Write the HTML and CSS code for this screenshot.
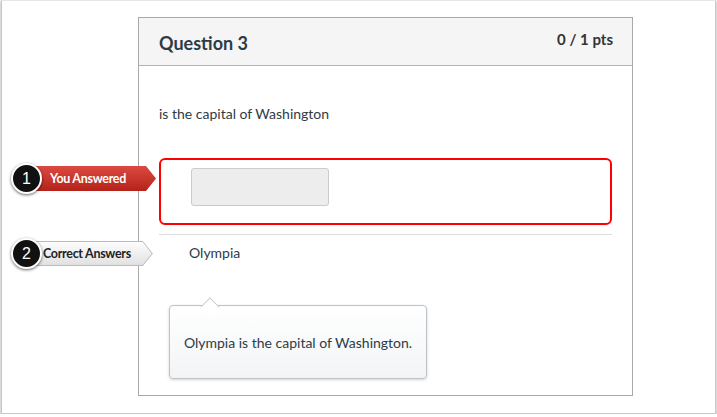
FILE: index.html
```html
<!DOCTYPE html>
<html>
<head>
<meta charset="utf-8">
<link rel="stylesheet" href="styles.css">
</head>
<body>
<div class="frame">
  <div class="card">
    <div class="card-head">
      <h2 class="q-title">Question 3</h2>
      <div class="q-pts">0 / 1 pts</div>
    </div>
    <div class="card-body">
      <p class="q-text">is the capital of Washington</p>
      <div class="answered">
        <div class="blank-input"></div>
      </div>
      <div class="correct">Olympia</div>
      <div class="tip">
        <span class="tip-arrow"></span>
        Olympia is the capital of Washington.
      </div>
    </div>
  </div>

  <div class="callout callout-1">
    <span class="num">1</span>
    <span class="tag tag-red">You Answered</span>
  </div>
  <div class="callout callout-2">
    <span class="num">2</span>
    <span class="tag tag-gray">Correct Answers</span>
  </div>
</div>
</body>
</html>
```

FILE: styles.css
```css
* { box-sizing: border-box; }
html, body { margin: 0; padding: 0; background: #fff; }
body {
  font-family: Lato, "Noto Sans", sans-serif;
  color: #2d3b45;
}
.frame {
  position: relative;
  margin: 0 1px 0 1px;
  width: 715px;
  height: 414px;
  border: 1px solid #c8c8c8;
  border-top-color: #e6e6e6;
  box-shadow: 0 1px 2px rgba(0,0,0,0.45);
  padding: 16px 0 0 136px;
}
.card {
  width: 495px;
  height: 379px;
  border: 1px solid #a9a9a9;
  background: #fff;
}
.card-head {
  height: 48px;
  background: #f5f5f5;
  border-bottom: 1px solid #b4b4b4;
  display: flex;
  justify-content: space-between;
  align-items: flex-start;
  padding: 0 19px 0 20px;
}
.q-title {
  margin: 14px 0 0;
  font-size: 18px;
  font-weight: 700;
  line-height: 22px;
}
.q-pts {
  margin-top: 12px;
  font-size: 15px;
  font-weight: 700;
  line-height: 18px;
  color: #333;
}
.card-body {
  padding: 0 20px;
}
.q-text {
  margin: 38px 0 0;
  font-size: 14px;
  line-height: 20px;
}
.answered {
  margin-top: 34px;
  height: 67px;
  border: 2px solid #f00;
  border-radius: 6px;
  padding: 8px 0 0 30px;
}
.blank-input {
  width: 138px;
  height: 38px;
  background: #ededed;
  border: 1px solid #cbcbcb;
  border-radius: 3px;
}
.correct {
  margin-top: 9px;
  border-top: 1px solid #ddd;
  padding: 8px 0 0 30px;
  font-size: 14px;
  line-height: 20px;
}
.tip {
  position: relative;
  margin: 42px 0 0 10px;
  width: 258px;
  height: 74px;
  border: 1px solid #bcc3cb;
  border-radius: 4px;
  background: linear-gradient(#fff, #f2f4f6);
  box-shadow: 0 1px 3px rgba(0,0,0,0.18);
  display: flex;
  align-items: center;
  justify-content: center;
  font-size: 14px;
  color: #2d3b45;
}
.tip-arrow {
  position: absolute;
  top: -10px;
  left: 32px;
  width: 16px;
  height: 16px;
  background: #fff;
  border-left: 1px solid #bcc3cb;
  border-top: 1px solid #bcc3cb;
  transform: translateY(3px) rotate(45deg) scale(0.85);
}
.callout {
  position: absolute;
  left: 9px;
  display: flex;
  align-items: center;
}
.callout-1 { top: 162px; }
.callout-2 { top: 237px; }
.num {
  position: relative;
  z-index: 2;
  width: 31px;
  height: 31px;
  border-radius: 50%;
  background: #111;
  border: 2px solid #fff;
  box-shadow: 0 1px 3px rgba(0,0,0,0.6);
  color: #fff;
  font-family: "Liberation Sans", Arial, sans-serif;
  font-size: 16px;
  line-height: 27px;
  text-align: center;
}
.tag {
  position: relative;
  margin-left: -9px;
  height: 25px;
  display: flex;
  align-items: center;
  font-size: 12.5px;
  font-weight: 700;
  line-height: 25px;
}
.tag-red {
  width: 123px;
  padding-left: 17px;
  color: #fff;
  background: linear-gradient(#db4a40, #b5221b);
  clip-path: polygon(0 0, 113px 0, 123px 50%, 113px 100%, 0 100%);
  letter-spacing: -0.3px;
}
.tag-gray {
  width: 120px;
  padding-left: 10px;
  color: #222;
  background: linear-gradient(#fefefe, #e0e0e0);
  clip-path: polygon(0 0, 110px 0, 120px 50%, 110px 100%, 0 100%);
  letter-spacing: -0.3px;
}
.tag-gray::after {
  content: "";
  position: absolute;
  inset: 0;
  background: #bbb;
  clip-path: polygon(0 0, 110px 0, 120px 50%, 110px 100%, 0 100%, 0 0, 0 1px, 0 calc(100% - 1px), 109.6px calc(100% - 1px), 118.8px 50%, 109.6px 1px, 0 1px);
}
```
